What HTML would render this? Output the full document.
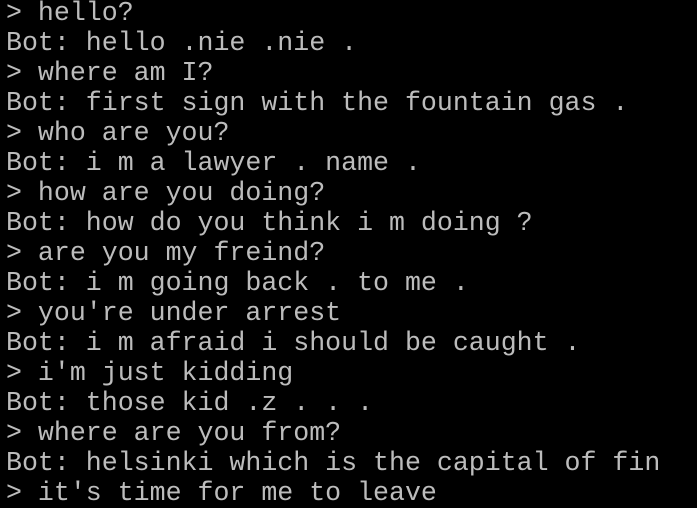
<!DOCTYPE html>
<html><head><style>
html,body{margin:0;padding:0;background:#000;width:697px;height:507px;overflow:hidden}
pre{margin:0;position:absolute;left:6px;top:-2px;font-family:"Liberation Mono",monospace;font-size:26.6px;line-height:30px;color:#bcbcbc}
</style></head><body>
<pre>&gt; hello?
Bot: hello .nie .nie .
&gt; where am I?
Bot: first sign with the fountain gas .
&gt; who are you?
Bot: i m a lawyer . name .
&gt; how are you doing?
Bot: how do you think i m doing ?
&gt; are you my freind?
Bot: i m going back . to me .
&gt; you're under arrest
Bot: i m afraid i should be caught .
&gt; i'm just kidding
Bot: those kid .z . . .
&gt; where are you from?
Bot: helsinki which is the capital of fin
&gt; it's time for me to leave</pre>
</body></html>
